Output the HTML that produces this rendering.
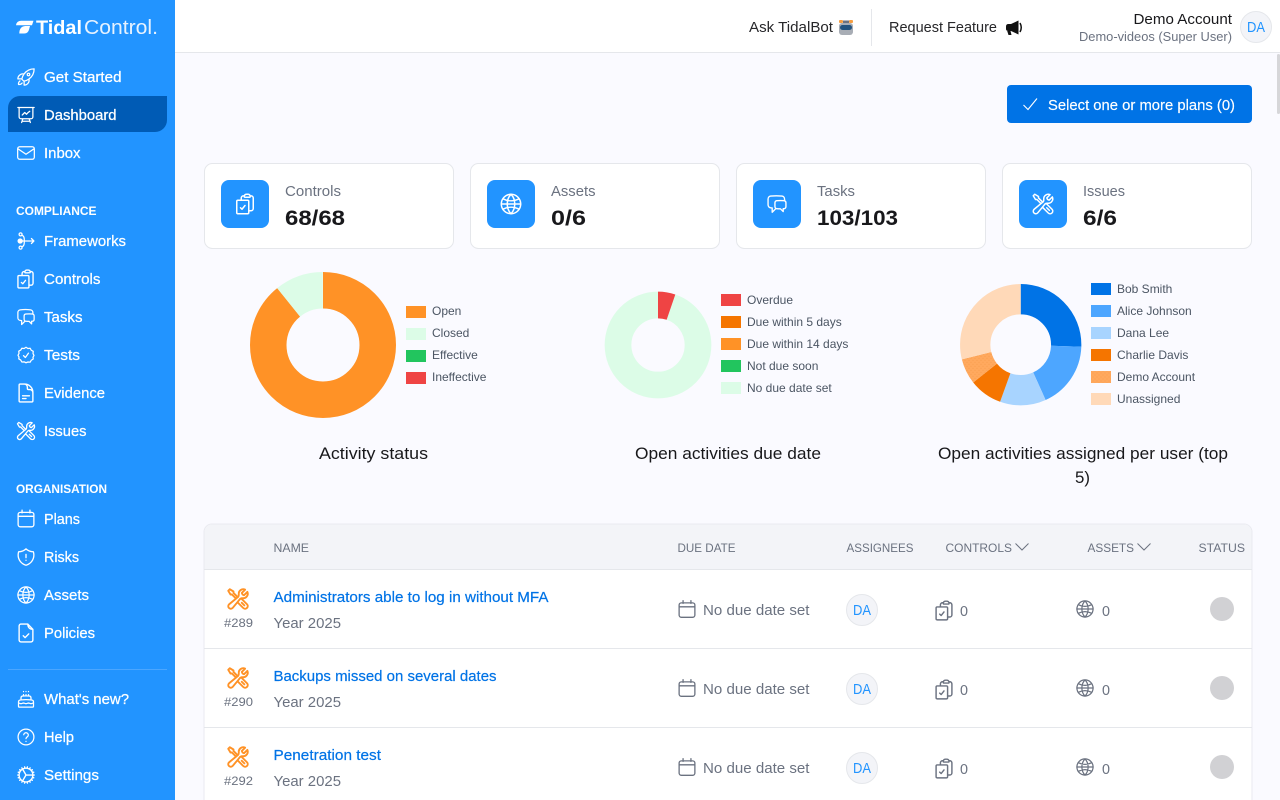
<!DOCTYPE html>
<html lang="en">
<head>
<meta charset="utf-8">
<title>Tidal Control Dashboard</title>
<style>
html,body{margin:0;padding:0;width:1280px;height:800px;overflow:hidden;background:#fafaff}
svg{display:block;font-family:"Liberation Sans",Arial,sans-serif}
.n{fill:#fff;font-size:14.5px;stroke:#fff;stroke-width:.25}
.sec{fill:#fff;font-size:12px;font-weight:700}
.lg{fill:#4b5563;font-size:12px}
.h{fill:#6b7280;font-size:12px}
.lab{fill:#6b7280;font-size:14.5px}
.val{fill:#18181b;font-size:21px;font-weight:700}
.t{fill:#18181b;font-size:16.5px}
.a{fill:#0073e6;font-size:14.5px;stroke:#0073e6;stroke-width:.2}
.g{fill:#6b7280;font-size:14.5px}
.d{fill:#18181b;font-size:14.5px}
.ic{fill:none;stroke:currentColor;stroke-width:1.5;stroke-linecap:round;stroke-linejoin:round}
.ib{stroke-width:1.9}
</style>
</head>
<body>
<svg width="1280" height="800" viewBox="0 0 1280 800" xmlns="http://www.w3.org/2000/svg">
<defs>
<pattern id="dots" width="4" height="4" patternUnits="userSpaceOnUse"><rect width="4" height="4" fill="#ffa95e"/><circle cx="1" cy="1" r=".5" fill="#f79a4a"/><circle cx="3" cy="3" r=".5" fill="#f79a4a"/></pattern>
<symbol id="rocket" viewBox="0 0 24 24"><path class="ic" d="M15.59 14.37a6 6 0 01-5.84 7.38v-4.8m5.84-2.58a14.98 14.98 0 006.16-12.12A14.98 14.98 0 009.63 8.41m5.96 5.96a14.926 14.926 0 01-5.841 2.58m-.119-8.54a6 6 0 00-7.381 5.84h4.8m2.581-5.84a14.927 14.927 0 00-2.58 5.84m2.699 2.7c-.103.021-.207.041-.311.06a15.09 15.09 0 01-2.448-2.448 14.9 14.9 0 01.06-.312m-2.24 2.39a4.493 4.493 0 00-1.757 4.306 4.493 4.493 0 004.306-1.758M16.5 9a1.5 1.5 0 11-3 0 1.5 1.5 0 013 0z"/></symbol>
<symbol id="board" viewBox="0 0 24 24"><path class="ic" d="M3.75 3v11.25A2.25 2.25 0 006 16.5h2.25M3.75 3h-1.5m1.5 0h16.5m0 0h1.5m-1.5 0v11.25A2.25 2.25 0 0118 16.5h-2.25m-7.5 0h7.5m-7.5 0l-1 3m8.5-3l1 3m0 0l.5 1.5m-.5-1.5h-9.5m0 0l-.5 1.5m.75-9l3-3 2.148 2.148A12.061 12.061 0 0116.5 7.605"/></symbol>
<symbol id="mail" viewBox="0 0 24 24"><rect class="ic" x="2" y="4.5" width="20" height="15" rx="2.5"/><path class="ic" d="M2.5 7l9.5 6.5L21.5 7"/></symbol>
<symbol id="flow" viewBox="0 0 24 24"><circle class="ic" cx="5.5" cy="4" r="1.8"/><circle class="ic" cx="5.5" cy="20" r="1.8"/><circle cx="5" cy="12" r="3.2" fill="currentColor"/><path class="ic" d="M7 5c3 1 3 4 3 7s0 6-3 7M7 12h14.5M18.5 9l3 3-3 3"/></symbol>
<symbol id="clip" viewBox="0 0 24 24"><path class="ic" d="M11.35 3.836c-.065.21-.1.433-.1.664 0 .414.336.75.75.75h4.5a.75.75 0 00.75-.75 2.25 2.25 0 00-.1-.664m-5.8 0A2.251 2.251 0 0113.5 2.25H15c1.012 0 1.867.668 2.15 1.586m-5.8 0c-.376.023-.75.05-1.124.08C9.095 4.01 8.25 4.973 8.25 6.108V8.25m8.9-4.414c.376.023.75.05 1.124.08 1.131.094 1.976 1.057 1.976 2.192V16.5A2.25 2.25 0 0118 18.75h-2.25m-7.5-10.5H4.875c-.621 0-1.125.504-1.125 1.125v11.25c0 .621.504 1.125 1.125 1.125h9.75c.621 0 1.125-.504 1.125-1.125V18.75m-7.5-10.5h6.375c.621 0 1.125.504 1.125 1.125v9.375m-8.25-3l1.5 1.5 3-3.75"/></symbol>
<symbol id="chat" viewBox="0 0 24 24"><path class="ic" d="M20.25 8.511c.884.284 1.5 1.128 1.5 2.097v4.286c0 1.136-.847 2.1-1.98 2.193-.34.027-.68.052-1.02.072v3.091l-3-3c-1.354 0-2.694-.055-4.02-.163a2.115 2.115 0 01-.825-.242m9.345-8.334a2.126 2.126 0 00-.476-.095 48.64 48.64 0 00-8.048 0c-1.131.094-1.976 1.057-1.976 2.192v4.286c0 .837.46 1.58 1.155 1.951m9.345-8.334V6.637c0-1.621-1.152-3.026-2.76-3.235A48.455 48.455 0 0011.25 3c-2.115 0-4.198.137-6.24.402-1.608.209-2.76 1.614-2.76 3.235v6.226c0 1.621 1.152 3.026 2.76 3.235.577.075 1.157.14 1.74.194V21l4.155-4.155"/></symbol>
<symbol id="badge" viewBox="0 0 24 24"><path class="ic" d="M9 12.75L11.25 15 15 9.75M12 2.7l2.3 1.5 2.7-.3 1.3 2.4 2.4 1.3-.3 2.7 1.2 2.2-1.2 2.2.3 2.1-2.4 1.5-1.3 2.3-2.7-.2L12 21.3l-2.3-1.1-2.7.2-1.3-2.3-2.400-1.500.3-2.1-1.2-2.2 1.2-2.2-.3-2.7 2.4-1.3L7 3.900l2.7.3z"/></symbol>
<symbol id="doc" viewBox="0 0 24 24"><path class="ic" d="M19.5 14.25v-2.625a3.375 3.375 0 00-3.375-3.375h-1.5A1.125 1.125 0 0113.5 7.125v-1.5a3.375 3.375 0 00-3.375-3.375H8.25m0 12.75h7.5m-7.5 3H12M10.5 2.25H5.625c-.621 0-1.125.504-1.125 1.125v17.25c0 .621.504 1.125 1.125 1.125h12.75c.621 0 1.125-.504 1.125-1.125V11.25a9 9 0 00-9-9z"/></symbol>
<symbol id="tools" viewBox="0 0 24 24"><path class="ic" d="M11.42 15.17L17.25 21A2.652 2.652 0 0021 17.25l-5.877-5.877M11.42 15.17l2.496-3.03c.317-.384.74-.626 1.208-.766M11.42 15.17l-4.655 5.653a2.548 2.548 0 11-3.586-3.586l6.837-5.63m5.108-.233c.55-.164 1.163-.188 1.743-.14a4.5 4.5 0 004.486-6.336l-3.276 3.277a3.004 3.004 0 01-2.25-2.25l3.276-3.276a4.5 4.5 0 00-6.336 4.486c.091 1.076-.071 2.264-.904 2.95l-.102.085m-1.745 1.437L5.909 7.5H4.5L2.25 3.75l1.5-1.5L7.5 4.5v1.409l4.26 4.26m-1.745 1.437l1.745-1.437m6.615 8.206L15.75 15.75"/></symbol>
<symbol id="toolsb" viewBox="0 0 24 24"><path class="ic ib" d="M11.42 15.17L17.25 21A2.652 2.652 0 0021 17.25l-5.877-5.877M11.42 15.17l2.496-3.03c.317-.384.74-.626 1.208-.766M11.42 15.17l-4.655 5.653a2.548 2.548 0 11-3.586-3.586l6.837-5.63m5.108-.233c.55-.164 1.163-.188 1.743-.14a4.5 4.5 0 004.486-6.336l-3.276 3.277a3.004 3.004 0 01-2.25-2.25l3.276-3.276a4.5 4.5 0 00-6.336 4.486c.091 1.076-.071 2.264-.904 2.95l-.102.085m-1.745 1.437L5.909 7.5H4.5L2.25 3.75l1.5-1.5L7.5 4.5v1.409l4.26 4.26m-1.745 1.437l1.745-1.437m6.615 8.206L15.75 15.75"/></symbol>
<symbol id="cal" viewBox="0 0 24 24"><rect class="ic" x="3" y="5" width="18" height="16.5" rx="2.5"/><path class="ic" d="M7.5 2.5v3M16.5 2.5v3M3 9.500h18"/></symbol>
<symbol id="shield" viewBox="0 0 24 24"><path class="ic" d="M12 9v3.75m0-10.036A11.959 11.959 0 013.598 6 11.99 11.99 0 003 9.75c0 5.592 3.824 10.29 9 11.622 5.176-1.332 9-6.03 9-11.622 0-1.31-.21-2.57-.598-3.75h-.152c-3.196 0-6.1-1.25-8.25-3.286zm0 13.036h.008v.008H12v-.008z"/></symbol>
<symbol id="globe" viewBox="0 0 24 24"><circle class="ic" cx="12" cy="12" r="9.7"/><path class="ic" d="M12 2.3c-5 5-5 14.4 0 19.4M12 2.3c5 5 5 14.4 0 19.4M4 6.800c5 2.6 11 2.6 16 0M4 17.2c5-2.6 11-2.6 16 0M2.300 12h19.4"/></symbol>
<symbol id="fcheck" viewBox="0 0 24 24"><path class="ic" d="M14 2.3H6.5a2 2 0 00-2 2v15.4a2 2 0 002 2h11a2 2 0 002-2V8zM14 2.3c0 3.5 2 5.7 5.5 5.7M9 15l2 2 4-4"/></symbol>
<symbol id="cake" viewBox="0 0 24 24"><path class="ic" d="M12 8.25v-1.5m0 1.5c-1.355 0-2.697.056-4.024.166C6.845 8.51 6 9.473 6 10.608v2.513m6-4.87c1.355 0 2.697.055 4.024.165C17.155 8.51 18 9.473 18 10.608v2.513m-3-4.87v-1.5m-6 1.5v-1.5m12 9.75l-1.5.75a3.354 3.354 0 01-3 0 3.354 3.354 0 00-3 0 3.354 3.354 0 01-3 0 3.354 3.354 0 00-3 0 3.354 3.354 0 01-3 0L3 16.5m15-3.38a48.474 48.474 0 00-6-.37c-2.032 0-4.034.125-6 .37m12 0c.39.049.777.102 1.163.16 1.07.16 1.837 1.094 1.837 2.175v5.17c0 .62-.504 1.124-1.125 1.124H4.125A1.125 1.125 0 013 20.625v-5.17c0-1.08.768-2.014 1.837-2.174A47.78 47.78 0 016 13.12M12 3v.2M9 3v.2M15 3v.2"/></symbol>
<symbol id="help" viewBox="0 0 24 24"><circle class="ic" cx="12" cy="12" r="9.5"/><path class="ic" d="M9.3 9.3a2.7 2.7 0 115.4.7c0 1.7-2.7 2-2.7 4M12 17.3v.1"/></symbol>
<symbol id="cog" viewBox="0 0 24 24"><path class="ic" d="M4.5 12a7.5 7.5 0 0015 0m-15 0a7.5 7.5 0 1115 0m-15 0H3m16.5 0H21m-1.5 0H12m-8.457 3.077l1.41-.513m14.095-5.13l1.41-.513M5.106 17.785l1.15-.964m11.49-9.642l1.149-.964M7.501 19.795l.75-1.3m7.5-12.99l.75-1.3m-6.063 16.658l.26-1.477m2.605-14.772l.26-1.477m0 17.726l-.26-1.477M10.698 4.614l-.26-1.477M16.5 19.794l-.75-1.299M7.5 4.205L12 12m6.894 5.785l-1.149-.964M6.256 7.178l-1.15-.964m15.352 8.864l-1.41-.513M4.954 9.435l-1.41-.514M12.002 12l-3.75 6.495"/></symbol>
</defs>

<rect width="1280" height="800" fill="#fafaff"/>

<!-- top bar -->
<rect x="175" width="1105" height="52" fill="#fff"/>
<rect x="175" y="52" width="1105" height="1" fill="#e5e7eb"/>
<text class="d" x="749" y="32" textLength="84" lengthAdjust="spacingAndGlyphs" style="fill:#27272a">Ask TidalBot</text>
<g>
<rect x="839" y="23" width="14" height="12" rx="3" fill="#a8adb5"/>
<rect x="840" y="25" width="12" height="5" rx="2.5" fill="#23537f"/>
<rect x="839" y="20" width="4" height="3" rx="1" fill="#f59e42"/><rect x="849" y="20" width="4" height="3" rx="1" fill="#f59e42"/>
<rect x="843" y="20.5" width="6" height="2.5" fill="#6b7280"/>
</g>
<rect x="871" y="9" width="1" height="37" fill="#e5e7eb"/>
<text class="d" x="889" y="32" textLength="108" lengthAdjust="spacingAndGlyphs" style="fill:#27272a">Request Feature</text>
<path d="M1006 26.500q0-2.500 2.500-2.500h2.500l7.500-3.500v14l-7.500-3.500h-.5l1 4h-3l-1.300-4H1008.500q-2.500 0-2.500-2z" fill="#111"/>
<path d="M1020 23q2.500 4.500 0 9" fill="none" stroke="#111" stroke-width="1.5"/>
<text class="d" x="1133.5" y="24" textLength="98.5" lengthAdjust="spacingAndGlyphs">Demo Account</text>
<text x="1079" y="41" textLength="153" lengthAdjust="spacingAndGlyphs" font-size="12.5" fill="#6b7280">Demo-videos (Super User)</text>
<circle cx="1256" cy="27" r="15.5" fill="#f3f4f8" stroke="#e5e7eb"/>
<text x="1247" y="32" textLength="18" lengthAdjust="spacingAndGlyphs" font-size="15" fill="#2294ff">DA</text>
<rect x="1277" y="54" width="3" height="60" rx="1.5" fill="#d6d6d9"/>

<!-- sidebar -->
<rect width="175" height="800" fill="#2294ff"/>
<path d="M16 25.300q.5-4.500 5-4.600H33.500l-1.500 4.600zM19.300 33.500q0-7 6-7.500h4.700l-.8 3q-1 4.500-5 4.500z" fill="#fff"/>
<text x="36" y="34" textLength="46" lengthAdjust="spacingAndGlyphs" font-size="19.5" font-weight="700" fill="#fff">Tidal</text>
<text x="84" y="34" textLength="74" lengthAdjust="spacingAndGlyphs" font-size="20" fill="#e6f2ff">Control.</text>

<path d="M20 96H167V120a12 12 0 01-12 12H8V108a12 12 0 0112-12z" fill="#005bb5"/>

<g color="#fff">
<use href="#rocket" x="16" y="67" width="20" height="20"/>
<use href="#board" x="16" y="105" width="20" height="20"/>
<use href="#mail" x="16" y="143" width="20" height="20"/>
<use href="#flow" x="16" y="231" width="20" height="20"/>
<use href="#clip" x="14.5" y="268" width="22" height="22"/>
<use href="#chat" x="16" y="307" width="20" height="20"/>
<use href="#badge" x="16" y="345" width="20" height="20"/>
<use href="#doc" x="15" y="382" width="22" height="22"/>
<use href="#tools" x="15.500" y="420.500" width="21" height="21"/>
<use href="#cal" x="15.500" y="508" width="21" height="21"/>
<use href="#shield" x="15.500" y="546.500" width="21" height="21"/>
<use href="#globe" x="16" y="585" width="20" height="20"/>
<use href="#fcheck" x="15" y="622" width="22" height="22"/>
<use href="#cake" x="16" y="689" width="20" height="20"/>
<use href="#help" x="16" y="727" width="20" height="20"/>
<use href="#cog" x="15" y="764" width="22" height="22"/>
</g>
<text class="n" x="44" y="82" textLength="77.5" lengthAdjust="spacingAndGlyphs">Get Started</text>
<text class="n" x="44" y="120" textLength="72.5" lengthAdjust="spacingAndGlyphs">Dashboard</text>
<text class="n" x="44" y="158" textLength="36.5" lengthAdjust="spacingAndGlyphs">Inbox</text>
<text class="sec" x="16" y="215" textLength="80.5" lengthAdjust="spacingAndGlyphs">COMPLIANCE</text>
<text class="n" x="44" y="246" textLength="82" lengthAdjust="spacingAndGlyphs">Frameworks</text>
<text class="n" x="44" y="284" textLength="56.5" lengthAdjust="spacingAndGlyphs">Controls</text>
<text class="n" x="44" y="322" textLength="38.5" lengthAdjust="spacingAndGlyphs">Tasks</text>
<text class="n" x="44" y="360" textLength="36" lengthAdjust="spacingAndGlyphs">Tests</text>
<text class="n" x="44" y="398" textLength="61" lengthAdjust="spacingAndGlyphs">Evidence</text>
<text class="n" x="44" y="436" textLength="42.5" lengthAdjust="spacingAndGlyphs">Issues</text>
<text class="sec" x="16" y="493" textLength="91" lengthAdjust="spacingAndGlyphs">ORGANISATION</text>
<text class="n" x="44" y="524" textLength="36" lengthAdjust="spacingAndGlyphs">Plans</text>
<text class="n" x="44" y="562" textLength="35" lengthAdjust="spacingAndGlyphs">Risks</text>
<text class="n" x="44" y="600" textLength="45" lengthAdjust="spacingAndGlyphs">Assets</text>
<text class="n" x="44" y="638" textLength="51" lengthAdjust="spacingAndGlyphs">Policies</text>
<rect x="8" y="669" width="159" height="1" fill="#4ba6ff"/>
<text class="n" x="44" y="704" textLength="85" lengthAdjust="spacingAndGlyphs">What's new?</text>
<text class="n" x="44" y="742" textLength="30" lengthAdjust="spacingAndGlyphs">Help</text>
<text class="n" x="44" y="780" textLength="55" lengthAdjust="spacingAndGlyphs">Settings</text>

<!-- action button -->
<rect x="1007" y="85" width="245" height="38" rx="4" fill="#0073e6"/>
<path d="M1023.500 105l4.500 4.500 9-11" fill="none" stroke="#fff" stroke-width="1.1"/>
<text x="1048" y="110" textLength="187" lengthAdjust="spacingAndGlyphs" font-size="14.5" fill="#fff" stroke="#fff" stroke-width=".15">Select one or more plans (0)</text>

<!-- stat cards -->
<g fill="#fff" stroke="#e5e7eb">
<rect x="204.500" y="163.500" width="249" height="85" rx="8"/>
<rect x="470.500" y="163.500" width="249" height="85" rx="8"/>
<rect x="736.500" y="163.500" width="249" height="85" rx="8"/>
<rect x="1002.500" y="163.500" width="249" height="85" rx="8"/>
</g>
<g fill="#2294ff">
<rect x="221" y="180" width="48" height="48" rx="8"/>
<rect x="487" y="180" width="48" height="48" rx="8"/>
<rect x="753" y="180" width="48" height="48" rx="8"/>
<rect x="1019" y="180" width="48" height="48" rx="8"/>
</g>
<g color="#fff">
<use href="#clip" x="233" y="192" width="24" height="24"/>
<use href="#globe" x="499" y="192" width="24" height="24"/>
<use href="#chat" x="766" y="193" width="22" height="22"/>
<use href="#tools" x="1031" y="192" width="24" height="24"/>
</g>
<text class="lab" x="285" y="196" textLength="56" lengthAdjust="spacingAndGlyphs">Controls</text>
<text class="lab" x="551" y="196" textLength="44.5" lengthAdjust="spacingAndGlyphs">Assets</text>
<text class="lab" x="817" y="196" textLength="38" lengthAdjust="spacingAndGlyphs">Tasks</text>
<text class="lab" x="1083" y="196" textLength="42" lengthAdjust="spacingAndGlyphs">Issues</text>
<text class="val" x="285" y="225" textLength="60" lengthAdjust="spacingAndGlyphs">68/68</text>
<text class="val" x="551" y="225" textLength="35" lengthAdjust="spacingAndGlyphs">0/6</text>
<text class="val" x="817" y="225" textLength="81" lengthAdjust="spacingAndGlyphs">103/103</text>
<text class="val" x="1083" y="225" textLength="34" lengthAdjust="spacingAndGlyphs">6/6</text>

<!-- chart 1 -->
<g fill="none" stroke-width="36.5" transform="rotate(-90 323 345)">
<circle cx="323" cy="345" r="54.75" pathLength="360" stroke="#ff9226" stroke-dasharray="321.3 360"/>
<circle cx="323" cy="345" r="54.75" pathLength="360" stroke="#dcfce7" stroke-dasharray="38.7 360" stroke-dashoffset="-321.3"/>
</g>
<rect x="406" y="306" width="20" height="12" fill="#ff9226"/><text class="lg" x="432" y="315">Open</text>
<rect x="406" y="328" width="20" height="12" fill="#dcfce7"/><text class="lg" x="432" y="337">Closed</text>
<rect x="406" y="350" width="20" height="12" fill="#22c55e"/><text class="lg" x="432" y="359">Effective</text>
<rect x="406" y="372" width="20" height="12" fill="#ef4444"/><text class="lg" x="432" y="381">Ineffective</text>
<text class="t" x="319" y="459" textLength="109" lengthAdjust="spacingAndGlyphs">Activity status</text>

<!-- chart 2 -->
<g fill="none" stroke-width="26.67" transform="rotate(-90 658 345)">
<circle cx="658" cy="345" r="40" pathLength="360" stroke="#dcfce7" stroke-dasharray="341 360" stroke-dashoffset="-19"/>
<circle cx="658" cy="345" r="40" pathLength="360" stroke="#ef4444" stroke-dasharray="19 360"/>
</g>
<rect x="721" y="294" width="20" height="12" fill="#ef4444"/><text class="lg" x="747" y="304">Overdue</text>
<rect x="721" y="316" width="20" height="12" fill="#f57500"/><text class="lg" x="747" y="326">Due within 5 days</text>
<rect x="721" y="338" width="20" height="12" fill="#ff9226"/><text class="lg" x="747" y="348">Due within 14 days</text>
<rect x="721" y="360" width="20" height="12" fill="#22c55e"/><text class="lg" x="747" y="370">Not due soon</text>
<rect x="721" y="382" width="20" height="12" fill="#dcfce7"/><text class="lg" x="747" y="392">No due date set</text>
<text class="t" x="635" y="459" textLength="186" lengthAdjust="spacingAndGlyphs">Open activities due date</text>

<!-- chart 3 -->
<g fill="none" stroke-width="30.3" transform="rotate(-90 1020.7 344.7)">
<circle cx="1020.7" cy="344.7" r="45.5" pathLength="360" stroke="#0073e6" stroke-dasharray="92 360"/>
<circle cx="1020.7" cy="344.7" r="45.5" pathLength="360" stroke="#4da6ff" stroke-dasharray="63.7 360" stroke-dashoffset="-92"/>
<circle cx="1020.7" cy="344.7" r="45.5" pathLength="360" stroke="#a8d4ff" stroke-dasharray="44.2 360" stroke-dashoffset="-155.7"/>
<circle cx="1020.7" cy="344.7" r="45.5" pathLength="360" stroke="#f57500" stroke-dasharray="31.6 360" stroke-dashoffset="-199.9"/>
<circle cx="1020.7" cy="344.7" r="45.5" pathLength="360" stroke="url(#dots)" stroke-dasharray="24.4 360" stroke-dashoffset="-231.5"/>
<circle cx="1020.7" cy="344.7" r="45.5" pathLength="360" stroke="#ffd9b8" stroke-dasharray="104.1 360" stroke-dashoffset="-255.9"/>
</g>
<rect x="1091" y="283" width="20" height="12" fill="#0073e6"/><text class="lg" x="1117" y="293">Bob Smith</text>
<rect x="1091" y="305" width="20" height="12" fill="#4da6ff"/><text class="lg" x="1117" y="315">Alice Johnson</text>
<rect x="1091" y="327" width="20" height="12" fill="#a8d4ff"/><text class="lg" x="1117" y="337">Dana Lee</text>
<rect x="1091" y="349" width="20" height="12" fill="#f57500"/><text class="lg" x="1117" y="359">Charlie Davis</text>
<rect x="1091" y="371" width="20" height="12" fill="url(#dots)"/><text class="lg" x="1117" y="381">Demo Account</text>
<rect x="1091" y="393" width="20" height="12" fill="#ffd9b8"/><text class="lg" x="1117" y="403">Unassigned</text>
<text class="t" x="938" y="459" textLength="290" lengthAdjust="spacingAndGlyphs">Open activities assigned per user (top</text>
<text class="t" x="1075" y="483" textLength="15" lengthAdjust="spacingAndGlyphs">5)</text>

<!-- table -->
<path d="M204 812V532a8 8 0 018-8H1244a8 8 0 018 8V812z" fill="#fff" stroke="#e9eaf0"/>
<path d="M204.500 569V532a7.5 7.5 0 017.5-7.5H1244a7.5 7.5 0 017.5 7.5V569z" fill="#f3f4f8"/>
<rect x="204" y="569" width="1048" height="1" fill="#e5e7eb"/>
<rect x="204" y="648" width="1048" height="1" fill="#e5e7eb"/>
<rect x="204" y="727" width="1048" height="1" fill="#e5e7eb"/>
<text class="h" x="273.500" y="552" textLength="35.5" lengthAdjust="spacingAndGlyphs">NAME</text>
<text class="h" x="677.500" y="552" textLength="58" lengthAdjust="spacingAndGlyphs">DUE DATE</text>
<text class="h" x="846.500" y="552" textLength="67" lengthAdjust="spacingAndGlyphs">ASSIGNEES</text>
<text class="h" x="945.500" y="552" textLength="66.5" lengthAdjust="spacingAndGlyphs">CONTROLS</text>
<path d="M1015.500 543.500l6.500 6.500 6.500-6.500" fill="none" stroke="#6b7280"/>
<text class="h" x="1087.500" y="552" textLength="46.5" lengthAdjust="spacingAndGlyphs">ASSETS</text>
<path d="M1137.500 543.500l6.500 6.500 6.500-6.500" fill="none" stroke="#6b7280"/>
<text class="h" x="1198.500" y="552" textLength="46.5" lengthAdjust="spacingAndGlyphs">STATUS</text>

<!-- row 1 -->
<use href="#toolsb" x="226" y="587" width="24" height="24" color="#ff9226"/>
<text x="224" y="627" textLength="29" lengthAdjust="spacingAndGlyphs" font-size="12" fill="#6b7280">#289</text>
<text class="a" x="273.500" y="602" textLength="275" lengthAdjust="spacingAndGlyphs">Administrators able to log in without MFA</text>
<text class="g" x="273.500" y="628" textLength="67.5" lengthAdjust="spacingAndGlyphs">Year 2025</text>
<use href="#cal" x="676.500" y="598.500" width="21" height="21" color="#6b7280"/>
<text class="g" x="703" y="615" textLength="106.5" lengthAdjust="spacingAndGlyphs">No due date set</text>
<circle cx="862" cy="610" r="15.5" fill="#f3f4f8" stroke="#e5e7eb"/>
<text x="853" y="615" textLength="18" lengthAdjust="spacingAndGlyphs" font-size="15" fill="#2294ff">DA</text>
<use href="#clip" x="932.500" y="599" width="23" height="23" color="#6b7280"/>
<text class="g" x="960" y="616" textLength="8" lengthAdjust="spacingAndGlyphs">0</text>
<use href="#globe" x="1075" y="599" width="20" height="20" color="#6b7280"/>
<text class="g" x="1102" y="616" textLength="8" lengthAdjust="spacingAndGlyphs">0</text>
<circle cx="1222" cy="609" r="12" fill="#d1d1d4"/>

<!-- row 2 -->
<use href="#toolsb" x="226" y="666" width="24" height="24" color="#ff9226"/>
<text x="224" y="706" textLength="29" lengthAdjust="spacingAndGlyphs" font-size="12" fill="#6b7280">#290</text>
<text class="a" x="273.500" y="681" textLength="223" lengthAdjust="spacingAndGlyphs">Backups missed on several dates</text>
<text class="g" x="273.500" y="707" textLength="67.5" lengthAdjust="spacingAndGlyphs">Year 2025</text>
<use href="#cal" x="676.500" y="677.500" width="21" height="21" color="#6b7280"/>
<text class="g" x="703" y="694" textLength="106.5" lengthAdjust="spacingAndGlyphs">No due date set</text>
<circle cx="862" cy="689" r="15.5" fill="#f3f4f8" stroke="#e5e7eb"/>
<text x="853" y="694" textLength="18" lengthAdjust="spacingAndGlyphs" font-size="15" fill="#2294ff">DA</text>
<use href="#clip" x="932.500" y="678" width="23" height="23" color="#6b7280"/>
<text class="g" x="960" y="695" textLength="8" lengthAdjust="spacingAndGlyphs">0</text>
<use href="#globe" x="1075" y="678" width="20" height="20" color="#6b7280"/>
<text class="g" x="1102" y="695" textLength="8" lengthAdjust="spacingAndGlyphs">0</text>
<circle cx="1222" cy="688" r="12" fill="#d1d1d4"/>

<!-- row 3 -->
<use href="#toolsb" x="226" y="745" width="24" height="24" color="#ff9226"/>
<text x="224" y="785" textLength="29" lengthAdjust="spacingAndGlyphs" font-size="12" fill="#6b7280">#292</text>
<text class="a" x="273.500" y="760" textLength="107.5" lengthAdjust="spacingAndGlyphs">Penetration test</text>
<text class="g" x="273.500" y="786" textLength="67.5" lengthAdjust="spacingAndGlyphs">Year 2025</text>
<use href="#cal" x="676.500" y="756.500" width="21" height="21" color="#6b7280"/>
<text class="g" x="703" y="773" textLength="106.5" lengthAdjust="spacingAndGlyphs">No due date set</text>
<circle cx="862" cy="768" r="15.5" fill="#f3f4f8" stroke="#e5e7eb"/>
<text x="853" y="773" textLength="18" lengthAdjust="spacingAndGlyphs" font-size="15" fill="#2294ff">DA</text>
<use href="#clip" x="932.500" y="757" width="23" height="23" color="#6b7280"/>
<text class="g" x="960" y="774" textLength="8" lengthAdjust="spacingAndGlyphs">0</text>
<use href="#globe" x="1075" y="757" width="20" height="20" color="#6b7280"/>
<text class="g" x="1102" y="774" textLength="8" lengthAdjust="spacingAndGlyphs">0</text>
<circle cx="1222" cy="767" r="12" fill="#d1d1d4"/>
</svg>
</body>
</html>
